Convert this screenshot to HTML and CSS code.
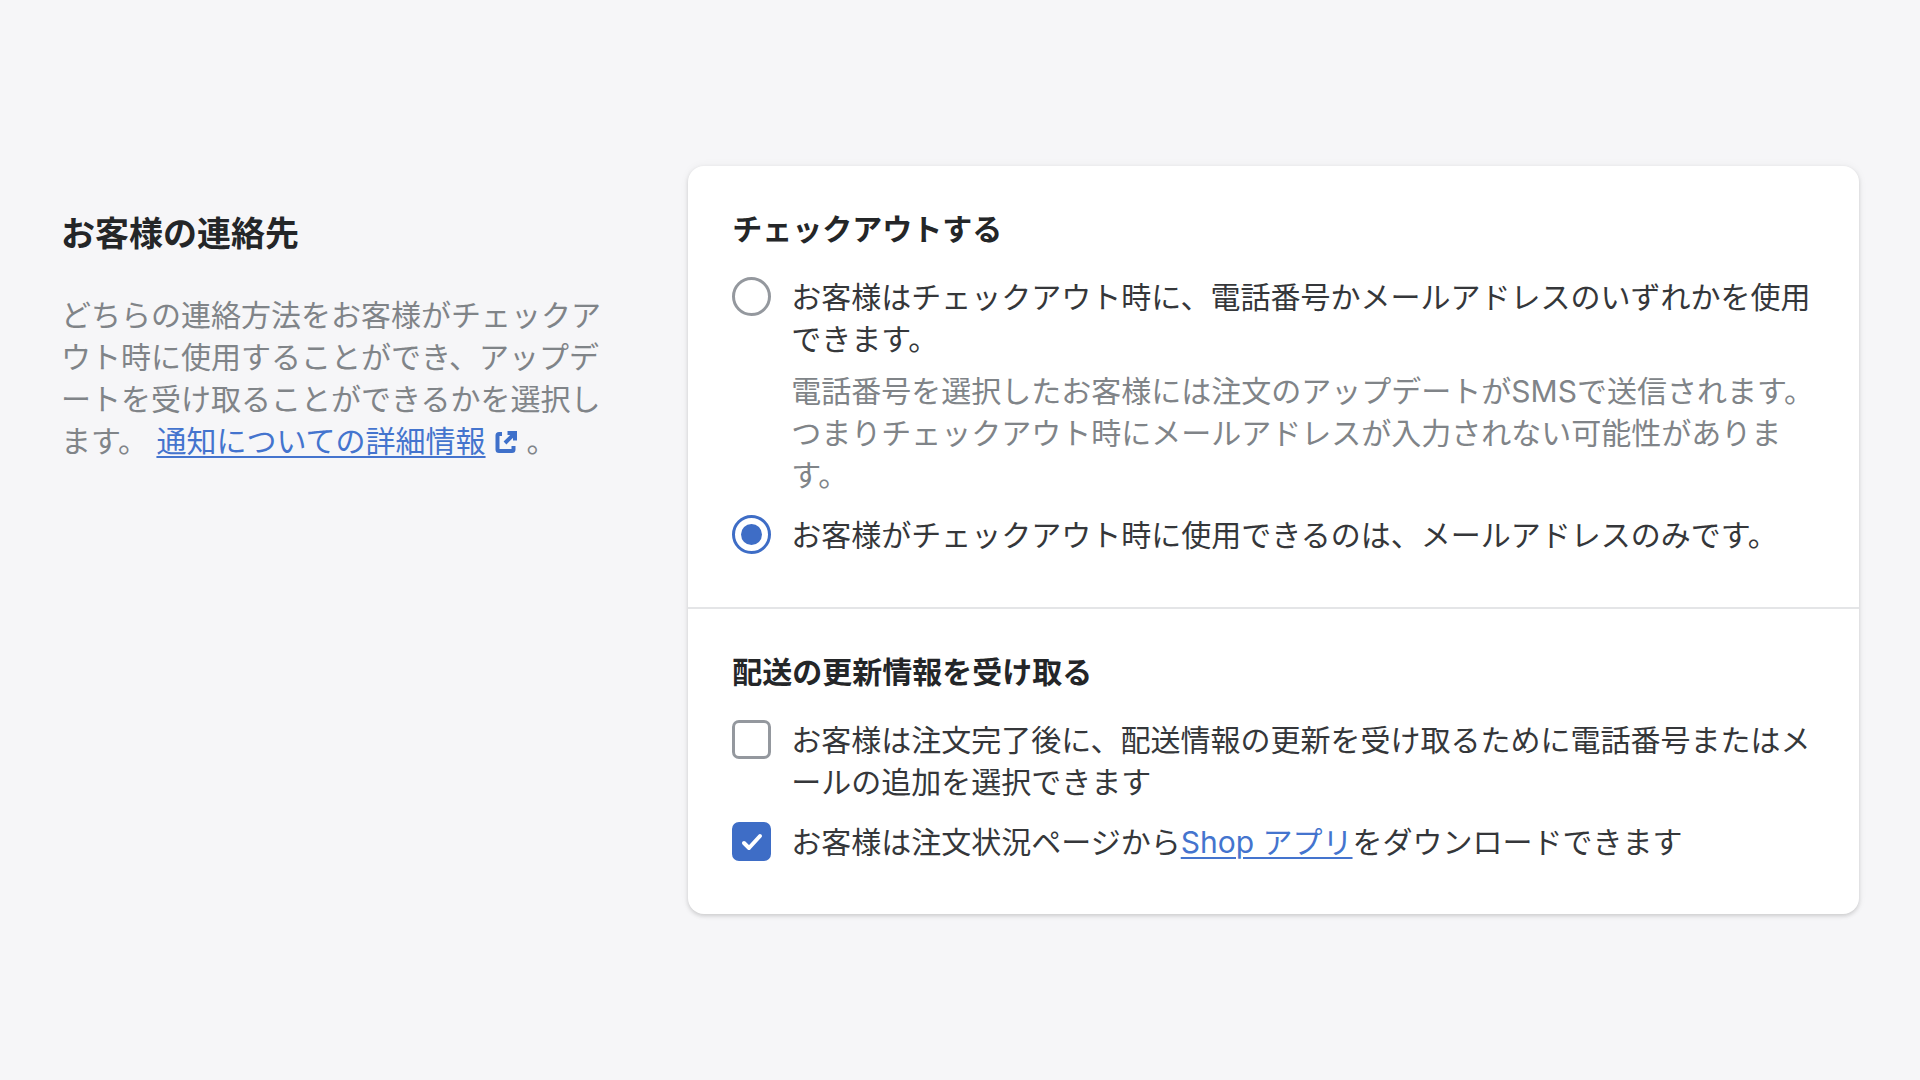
FILE: index.html
```html
<!DOCTYPE html>
<html lang="ja">
<head>
<meta charset="UTF-8">
<meta name="viewport" content="width=device-width, initial-scale=1.0">
<title>お客様の連絡先</title>
<link rel="stylesheet" href="styles.css">
</head>
<body>

<main class="settings">
    <div class="intro">
        <h1>お客様の連絡先</h1>
        <p>どちらの連絡方法をお客様がチェックアウト時に使用することができ、アップデートを受け取ることができるかを選択します。 <a href="#notifications">通知についての詳細情報</a><svg class="external-icon" viewBox="0 0 22 22" aria-hidden="true"><path d="M7 3H4Q2.500 3 2.500 4.500V18.500Q2.500 20 4 20H17Q18.500 20 18.500 18.500V15" /><path d="M10 12L19.500 2.500M12.500 2H20V9.500" /></svg>。</p>
    </div>

    <form class="card">
        <section class="card-section" role="radiogroup" aria-labelledby="checkoutTitle">
            <h2 id="checkoutTitle">チェックアウトする</h2>
            <div class="choice">
                <input type="radio" id="phoneOrEmail" name="contact" aria-describedby="phoneOrEmailHelp">
                <div class="choice-text">
                    <label for="phoneOrEmail">お客様はチェックアウト時に、電話番号かメールアドレスのいずれかを使用できます。</label>
                    <p class="help-text" id="phoneOrEmailHelp">電話番号を選択したお客様には注文のアップデートがSMSで送信されます。つまりチェックアウト時にメールアドレスが入力されない可能性があります。</p>
                </div>
            </div>
            <div class="choice">
                <input type="radio" id="emailOnly" name="contact" checked>
                <div class="choice-text">
                    <label for="emailOnly">お客様がチェックアウト時に使用できるのは、メールアドレスのみです。</label>
                </div>
            </div>
        </section>

        <section class="card-section" role="group" aria-labelledby="shippingTitle">
            <h2 id="shippingTitle">配送の更新情報を受け取る</h2>
            <div class="choice">
                <input type="checkbox" id="shippingUpdates">
                <div class="choice-text">
                    <label for="shippingUpdates">お客様は注文完了後に、配送情報の更新を受け取るために電話番号またはメールの追加を選択できます</label>
                </div>
            </div>
            <div class="choice">
                <input type="checkbox" id="shopApp" checked>
                <div class="choice-text">
                    <label for="shopApp">お客様は注文状況ページから<a href="#shop-app">Shop アプリ</a>をダウンロードできます</label>
                </div>
            </div>
        </section>
    </form>
</main>

</body>
</html>
```
FILE: styles.css
```css
* {
    box-sizing: border-box;
}
body {
    margin: 0;
    background-color: #f6f6f8;
    color: #35373a;
    font-family: Inter, "Noto Sans CJK JP", sans-serif;
    font-size: 30px;
    line-height: 42px;
    line-break: loose;
}
h1, h2, p {
    margin: 0;
}
h1, h2 {
    color: #242628;
    font-weight: 600;
}
a {
    color: #4474ce;
    text-decoration-thickness: 2px;
    text-underline-offset: 4px;
}
.settings {
    display: grid;
    grid-template-columns: 1fr 2fr;
    gap: 42px;
    align-content: center;
    min-height: 100vh;
    padding: 40px 61px;
}
.intro {
    padding: 44px 24px 0 0;
    color: #808488;
}
.intro h1 {
    margin-bottom: 36px;
    font-size: 34px;
    line-height: 48px;
}
.external-icon {
    width: 22px;
    height: 22px;
    margin: 0 10px 0 9px;
    vertical-align: -1px;
    fill: none;
    stroke: #3f70ca;
    stroke-width: 4;
}
.card {
    background-color: #fff;
    border-radius: 16px;
    box-shadow: 0 0 10px rgba(23, 24, 24, 0.05), 0 2px 4px rgba(0, 0, 0, 0.15);
}
.card-section {
    display: flex;
    flex-direction: column;
    gap: 18px;
    padding: 42px 36px 51px 44px;
}
.card-section + .card-section {
    border-top: 2px solid #e4e5e7;
}
.card-section h2 {
    margin-bottom: 8px;
    font-size: 30px;
}
.choice {
    display: flex;
    align-items: flex-start;
    gap: 20px;
}
.choice-text {
    flex: 1;
}
.choice-text label {
    display: block;
}
.help-text {
    margin-top: 10px;
    color: #808488;
}

/* radios and checkboxes */
.choice input {
    appearance: none;
    display: grid;
    place-content: center;
    flex: none;
    width: 39px;
    height: 39px;
    margin: 1px 0;
    border: 3px solid #94989e;
    background-color: #fff;
}
.choice input[type="radio"] {
    border-radius: 50%;
}
.choice input[type="checkbox"] {
    border-radius: 7px;
}
.choice input:checked {
    border-color: #3e6dc6;
}
.choice input[type="radio"]:checked::before {
    content: "";
    width: 21px;
    height: 21px;
    border-radius: 50%;
    background-color: #3e6dc6;
}
.choice input[type="checkbox"]:checked {
    background: #3e6dc6 url("data:image/svg+xml,%3Csvg xmlns='http://www.w3.org/2000/svg' viewBox='0 0 22 18' fill='none' stroke='white' stroke-width='4' stroke-linecap='round' stroke-linejoin='round'%3E%3Cpath d='M3 10l5 5L19 3'/%3E%3C/svg%3E") center / 22px 18px no-repeat;
}
```
